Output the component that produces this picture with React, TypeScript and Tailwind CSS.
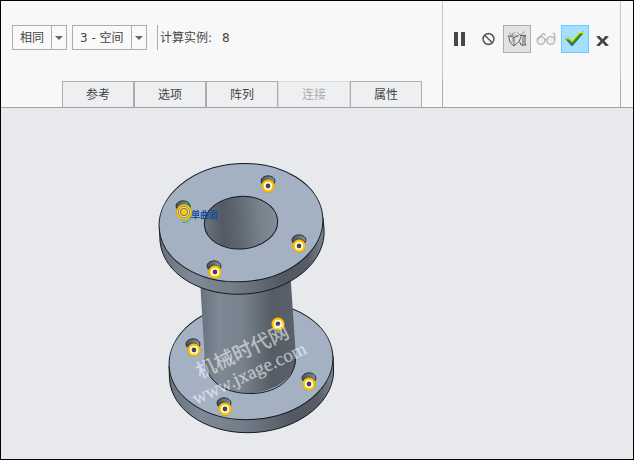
import { useState } from 'react'

interface DropdownProps {
  label: string
  options: string[]
  className: string
}

interface Point {
  x: number
  y: number
}

const tabs = [
  { name: '参考' },
  { name: '选项' },
  { name: '阵列' },
  { name: '连接', disabled: true },
  { name: '属性' },
]

const bottomHoles: Point[] = [
  { x: 193, y: 344 },
  { x: 309, y: 378 },
  { x: 224, y: 403 },
]

const topHoles: Point[] = [
  { x: 268, y: 181 },
  { x: 183, y: 206 },
  { x: 299, y: 240 },
  { x: 214, y: 266 },
]

const bottomPins: Point[] = [
  { x: 194, y: 350 },
  { x: 278, y: 324 },
  { x: 309, y: 384 },
  { x: 225, y: 409 },
]

const topPins: Point[] = [
  { x: 268, y: 186 },
  { x: 299, y: 246 },
  { x: 215, y: 272 },
]

function Dropdown({ label, options, className }: DropdownProps) {
  return (
    <div className={`relative h-[25px] border border-[#adadad] bg-[#f9f9f9] ${className}`}>
      <select aria-label={label} className="block h-full w-full appearance-none bg-transparent pl-[7px] pr-4 outline-none">
        {options.map((option) => (
          <option key={option}>{option}</option>
        ))}
      </select>
      <span className="pointer-events-none absolute inset-y-0 right-0 flex w-[15px] items-center justify-center border-l border-[#adadad]">
        <svg width="8" height="4" viewBox="0 0 8 4" aria-hidden="true">
          <path d="M0 0h8L4 4z" fill="#666" />
        </svg>
      </span>
    </div>
  )
}

function Hole({ x, y }: Point) {
  return (
    <g>
      <ellipse cx={x} cy={y} rx="7" ry="5.200" fill="url(#hole)" stroke="#23272c" strokeWidth="0.9" />
      <path d={`M${x - 6} ${y + 2}q6 -6 12 0`} fill="none" stroke="#23272c" strokeWidth="0.6" />
    </g>
  )
}

function Pin({ x, y }: Point) {
  return (
    <g>
      <circle cx={x} cy={y} r="6.500" fill="#ffc800" stroke="#b58a10" strokeWidth="0.4" />
      <circle cx={x} cy={y} r="4.100" fill="#fff" />
      <circle cx={x} cy={y} r="2.400" fill="#444" />
    </g>
  )
}

function FlangeModel() {
  return (
    <svg width="190" height="285" viewBox="151 155 190 285" role="img" aria-label="法兰模型">
      <defs>
        <linearGradient id="side">
          <stop offset="0" stopColor="#68727c" />
          <stop offset="0.2" stopColor="#7f8a96" />
          <stop offset="0.45" stopColor="#737d88" />
          <stop offset="0.75" stopColor="#535963" />
          <stop offset="0.9" stopColor="#565c66" />
          <stop offset="1" stopColor="#7b8692" />
        </linearGradient>
        <linearGradient id="tube">
          <stop offset="0" stopColor="#67717c" />
          <stop offset="0.2" stopColor="#7e8995" />
          <stop offset="0.45" stopColor="#77828d" />
          <stop offset="0.75" stopColor="#565c66" />
          <stop offset="1" stopColor="#5b616b" />
        </linearGradient>
        <linearGradient id="bore">
          <stop offset="0" stopColor="#6b747f" />
          <stop offset="0.25" stopColor="#545a64" />
          <stop offset="0.45" stopColor="#5e6670" />
          <stop offset="0.75" stopColor="#76818c" />
          <stop offset="1" stopColor="#828d99" />
        </linearGradient>
        <linearGradient id="hole">
          <stop offset="0" stopColor="#4c525b" />
          <stop offset="1" stopColor="#87929e" />
        </linearGradient>
      </defs>

      {/* Bottom flange */}
      <g stroke="#16191d">
        <path d="M169 366L169.500 379.500A81 58.200 -4 0 0 333.500 367.500L333 356Z" fill="url(#side)" />
        <ellipse cx="251" cy="361" rx="82" ry="58.500" transform="rotate(-4 251 361)" fill="#a4b1c3" />
      </g>

      {/* Tube */}
      <path d="M200 280L205 362A45.500 33 -4 0 0 296 358L290.500 276Z" fill="url(#tube)" />
      <path d="M205 358C205 381 224 394 252 393.500C279 393 296 377 295.500 357" fill="none" stroke="#16191d" />
      {bottomHoles.map((hole) => (
        <Hole key={hole.x} {...hole} />
      ))}
      {bottomPins.map((pin) => (
        <Pin key={pin.x} {...pin} />
      ))}

      {/* Top flange */}
      <g stroke="#16191d">
        <path d="M159.500 227L160 241A81 58.300 -4 0 0 324 229L323 218Z" fill="url(#side)" />
        <ellipse cx="241" cy="222.700" rx="82" ry="59" transform="rotate(-4 241 222.700)" fill="#a4b1c3" />
        <ellipse cx="241" cy="222.700" rx="36.700" ry="26.300" transform="rotate(-4 241 222.700)" fill="url(#bore)" />
      </g>
      {topHoles.map((hole) => (
        <Hole key={hole.x} {...hole} />
      ))}
      {topPins.map((pin) => (
        <Pin key={pin.x} {...pin} />
      ))}

      {/* Selected instance */}
      <path d="M187 201Q191 204 191 209L188 206Z" fill="#14852a" />
      <path d="M182 222Q190 224 191 216" fill="none" stroke="#2cae3c" />
      <circle cx="184" cy="212" r="7.700" fill="#ffc800" stroke="#b58a10" strokeWidth="0.4" />
      <circle cx="184" cy="212" r="5.500" fill="#fff" stroke="#55503a" strokeWidth="0.7" />
      <circle cx="184" cy="212" r="3.800" fill="#ffc800" stroke="#55503a" strokeWidth="0.8" />
      <text x="191" y="218" fill="#184b98" className="font-['Noto_Sans_CJK_SC',sans-serif] text-[9px] font-bold">
        单曲面
      </text>

      {/* Watermark */}
      <g fill="#fff" fillOpacity="0.55">
        <text transform="translate(200 379) rotate(-25)" className="font-['Noto_Sans_CJK_SC',sans-serif] text-[20px] font-medium">
          机械时代网
        </text>
        <text transform="translate(196 405) rotate(-25)" className="font-['Liberation_Serif',serif] text-[19px]" stroke="#fff" strokeOpacity="0.3" strokeWidth="0.4">
          www.jxage.com
        </text>
      </g>
    </svg>
  )
}

export default function App() {
  const [activeTab, setActiveTab] = useState('')

  return (
    <div className="flex min-h-screen flex-col border border-black bg-[#e8e9ed] font-['DejaVu_Sans','Noto_Sans_CJK_SC',sans-serif] text-xs text-[#444]">
      <header className="flex h-[107px] border-b border-[#a2a2a2] bg-[#f8f8f8]">
        <div className="flex flex-1 flex-col justify-between">
          <div className="flex items-center pl-[11px] pt-6">
            <Dropdown label="再生选项" options={['相同', '可变', '常规']} className="w-[55px]" />
            <Dropdown label="阵列方式" options={['3 - 空间', '2 - 曲面', '1 - 平面']} className="ml-[5px] w-[75px]" />
            <div className="ml-[10px] flex h-[25px] items-center border-l border-[#adadad] pl-0.5">
              <span>计算实例:</span>
              <output className="ml-2.5">8</output>
            </div>
          </div>
          <nav className="flex pl-[61px]">
            {tabs.map((tab) => (
              <button
                key={tab.name}
                disabled={tab.disabled}
                aria-pressed={activeTab === tab.name}
                onClick={() => setActiveTab(activeTab === tab.name ? '' : tab.name)}
                className="h-[26px] w-[72px] border border-b-0 border-[#adadad] bg-[#eeeff1] disabled:border-[#dadcdf] disabled:text-[#adadad]"
              >
                {tab.name}
              </button>
            ))}
          </nav>
        </div>

        <div className="flex flex-col">
          <div className="flex h-[78px] gap-px border-x border-[#c6c6c8] px-0.5 pt-6">
            <button aria-label="暂停" className="flex size-7 items-center justify-center">
              <svg width="12" height="14" viewBox="0 0 12 14" fill="#484848">
                <path d="M1 0h4v14H1zM8 0h4v14H8z" />
              </svg>
            </button>
            <button aria-label="无预览" className="flex size-7 items-center justify-center">
              <svg width="14" height="14" viewBox="0 0 14 14" fill="none" stroke="#5a5a5a" strokeWidth="1.600">
                <circle cx="7.500" cy="7" r="5.400" />
                <path d="M4 3.500L11 10.500" />
              </svg>
            </button>
            <button aria-label="分离预览" className="flex size-7 items-center justify-center border border-[#adadad] bg-[#e1e2e4]">
              <svg width="20" height="16" viewBox="0 0 20 16" fill="none" stroke="#555">
                <path d="M1.500 4.500L3 11.500L7 15L12 10.500L15 4M1.500 4.500L7 6.500V15M7 6.500L12 4.500" strokeWidth="0.9" />
                <path d="M1.500 4.500H12M5.500 2V10L3 11.500M5.500 10H8" stroke="#999" strokeWidth="0.7" />
                <path d="M2 1.500L5 4M8 1L5 4M10 1.500L14 4.500M18 0.500L13 4.500" stroke="#888" strokeWidth="0.8" />
                <path d="M13 4.500H19L16 6.500V14.500M18 5V12L19 14H14L12.500 10.500" strokeWidth="0.9" />
              </svg>
            </button>
            <button aria-label="校验预览" className="flex size-7 items-center justify-center">
              <svg width="20" height="14" viewBox="0 0 20 14" fill="none" stroke="#b5b5b5" strokeWidth="1.300">
                <circle cx="5" cy="8.500" r="3.900" fill="#eee" />
                <circle cx="14.700" cy="8.500" r="3.900" fill="#eee" />
                <path d="M8.700 8Q9.800 7 10.900 8M1.300 8L6 2.500Q8 0.500 9.500 3.500M18.700 8.500V2.500Q18.700 1 16.700 1.500" />
              </svg>
            </button>
            <button aria-label="确定" className="flex size-7 items-center justify-center border border-[#70c9fb] bg-[#a4dfff]">
              <svg width="20" height="16" viewBox="0 0 20 16">
                <path d="M0.500 7.500L4 7L7 10L15 2L19 1L7 15Z" fill="#2f8b50" stroke="#235438" strokeWidth="0.8" />
                <path d="M0.500 7.500H4L7 10.200L14.500 1.800H19.500" fill="none" stroke="#dceb08" strokeWidth="1.500" />
              </svg>
            </button>
            <button aria-label="取消" className="flex size-7 items-center pl-1.5 pt-1">
              <svg width="13" height="10" viewBox="0 0 13 10" stroke="#444" strokeWidth="2.600">
                <path d="M2 0.500L11 9.500M11 0.500L2 9.500" />
                <path d="M0.500 0.700H4M9 0.700H12.500M0.500 9.300H4M9 9.300H12.500" strokeWidth="1" />
              </svg>
            </button>
          </div>
          <div className="flex-1 border-x border-[#adadad]" />
        </div>
        <div className="w-3" />
      </header>

      <main className="flex-1 pl-[150px] pt-[47px]">
        <FlangeModel />
      </main>
    </div>
  )
}
